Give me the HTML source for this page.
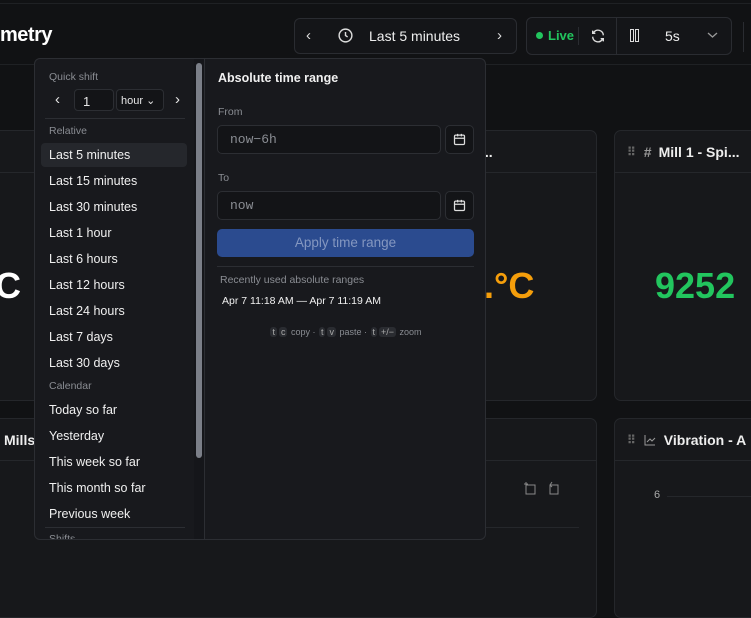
<!DOCTYPE html>
<html><head><meta charset="utf-8"><style>
*{box-sizing:border-box;margin:0;padding:0}
body{width:751px;height:588px;overflow:hidden;background:#111214;font-family:"Liberation Sans",sans-serif;color:#e6e6e6;position:relative}
.abs{position:absolute}
.panel{position:absolute;background:#17181b;border:1px solid #25272b;border-radius:7px}
.ph{position:absolute;left:0;right:0;top:0;height:42px;border-bottom:1px solid #25272b;display:flex;align-items:center;font-size:14px;font-weight:bold;color:#eee}
.btn{position:absolute;border:1px solid #2a2c31;border-radius:6px;background:#141518}
.dd{position:absolute;left:34px;top:58px;width:452px;height:482px;background:#18191d;border:1px solid #2c2e33;border-radius:6px;overflow:hidden}
.item{position:absolute;left:14px;font-size:12.5px;color:#f0f0f0}
.lab{position:absolute;left:14px;font-size:10.5px;color:#8a8d93}
.inp{position:absolute;border:1px solid #2c2e33;border-radius:5px;background:#131417;font-family:"Liberation Mono",monospace;font-size:13px;color:#8a8d93;padding-left:12px;display:flex;align-items:center}
.kbd{display:inline-block;background:#2a2c31;border-radius:3px;padding:0 2px;margin:0 1px;color:#aaa}
</style></head><body>
<div class="abs" style="left:0;top:0;width:751px;height:65px;background:#111214;border-bottom:1px solid #1f2124"></div>
<div class="abs" style="left:0;top:3px;width:751px;border-top:1px solid #1f2124"></div>
<div class="abs" style="left:0;top:24px;font-size:20px;font-weight:bold;color:#fff;letter-spacing:-0.5px">metry</div>

<div class="btn" style="left:294px;top:18px;width:223px;height:36px"></div>
<div class="abs" style="left:306px;top:27px;font-size:15px;color:#ddd">&#8249;</div>
<svg class="abs" style="left:337px;top:27px" width="17" height="17" viewBox="0 0 24 24" fill="none" stroke="#ddd" stroke-width="2"><circle cx="12" cy="12" r="9"/><path d="M12 7v5l3 2"/></svg>
<div class="abs" style="left:369px;top:28px;font-size:14px;color:#eee">Last 5 minutes</div>
<div class="abs" style="left:497px;top:27px;font-size:15px;color:#ddd">&#8250;</div>

<div class="btn" style="left:526px;top:17px;width:206px;height:38px"></div>
<div class="abs" style="left:536px;top:32px;width:7px;height:7px;border-radius:50%;background:#22c55e"></div>
<div class="abs" style="left:548px;top:28px;font-size:13px;color:#22c55e;font-weight:bold">Live</div>
<div class="abs" style="left:578px;top:27px;height:18px;border-left:1px solid #2a2c31"></div>
<svg class="abs" style="left:590px;top:28px" width="16" height="16" viewBox="0 0 24 24" fill="none" stroke="#ddd" stroke-width="2"><path d="M20 11a8 8 0 0 0-14-5L4 8M4 4v4h4M4 13a8 8 0 0 0 14 5l2-2M20 20v-4h-4"/></svg>
<div class="abs" style="left:616px;top:17px;height:38px;border-left:1px solid #2a2c31"></div>
<div class="abs" style="left:630px;top:29px;width:4px;height:13px;border:1.5px solid #ddd"></div>
<div class="abs" style="left:635px;top:29px;width:4px;height:13px;border:1.5px solid #ddd"></div>
<div class="abs" style="left:665px;top:28px;font-size:14px;color:#eee">5s</div>
<svg class="abs" style="left:707px;top:31px" width="11" height="8" viewBox="0 0 11 8" fill="none" stroke="#999" stroke-width="1.3"><path d="M1 2l4.5 4L10 2"/></svg>
<div class="abs" style="left:743px;top:22px;height:30px;border-left:1px solid #2a2c31"></div>

<!-- panels -->
<div class="panel" style="left:-10px;top:130px;width:607px;height:271px"><div class="ph" style="padding-left:490px">...</div>
<div class="abs" style="left:4px;top:134px;font-size:36px;font-weight:bold;color:#fff">C</div>
<div class="abs" style="left:493px;top:134px;font-size:36px;font-weight:bold;color:#f59e0b">.°C</div></div>
<div class="panel" style="left:614px;top:130px;width:150px;height:271px"><div class="ph" style="padding-left:12px"><span style="color:#666;font-size:12px;margin-right:8px">⠿</span><span style="color:#999;margin-right:7px">#</span>Mill 1 - Spi...</div>
<div class="abs" style="left:40px;top:134px;font-size:36px;font-weight:bold;color:#22c55e">9252</div></div>
<div class="panel" style="left:-10px;top:418px;width:607px;height:200px"><div class="ph" style="padding-left:13px">Mills</div>
<div class="abs" style="left:488px;top:108px;width:100px;border-top:1px solid #25272b"></div>
<svg class="abs" style="left:532px;top:62px" width="36" height="14" viewBox="0 0 36 14" fill="none" stroke="#888" stroke-width="1"><path d="M3 4h9v9H3zM3 1v5M1 3h4M27 4h8v9h-8zM27 4l2-3M27 4l2 2"/></svg></div>
<div class="panel" style="left:614px;top:418px;width:150px;height:200px"><div class="ph" style="padding-left:12px"><span style="color:#666;font-size:12px;margin-right:8px">⠿</span><svg width="12" height="12" viewBox="0 0 12 12" fill="none" stroke="#999" stroke-width="1" style="margin-right:8px"><path d="M1 1v10h10M3 8l3-3 2 2 3-3"/></svg>Vibration - A</div>
<div class="abs" style="left:39px;top:70px;font-size:11px;color:#aaa">6</div>
<div class="abs" style="left:52px;top:77px;width:100px;border-top:1px solid #25272b"></div></div>

<!-- dropdown -->
<div class="dd">
<div class="lab" style="top:12px">Quick shift</div>
<div class="abs" style="left:20px;top:32px;font-size:15px">&#8249;</div>
<div class="abs" style="left:39px;top:30px;width:40px;height:22px;border:1px solid #2c2e33;border-radius:4px;background:#131417;font-size:13px;padding:4px 0 0 8px">1</div>
<div class="abs" style="left:81px;top:30px;width:48px;height:22px;border:1px solid #2c2e33;border-radius:4px;background:#131417;font-size:11px;padding:4px 0 0 4px">hour &#8964;</div>
<div class="abs" style="left:140px;top:32px;font-size:15px">&#8250;</div>
<div class="abs" style="left:10px;top:59px;width:140px;border-top:1px solid #2c2e33"></div>
<div class="lab" style="top:66px">Relative</div>
<div class="abs" style="left:6px;top:84px;width:146px;height:24px;background:#25272c;border-radius:4px"></div>
<div class="item" style="top:89px">Last 5 minutes</div>
<div class="item" style="top:115px">Last 15 minutes</div>
<div class="item" style="top:141px">Last 30 minutes</div>
<div class="item" style="top:167px">Last 1 hour</div>
<div class="item" style="top:193px">Last 6 hours</div>
<div class="item" style="top:219px">Last 12 hours</div>
<div class="item" style="top:245px">Last 24 hours</div>
<div class="item" style="top:271px">Last 7 days</div>
<div class="item" style="top:297px">Last 30 days</div>
<div class="lab" style="top:321px">Calendar</div>
<div class="item" style="top:344px">Today so far</div>
<div class="item" style="top:370px">Yesterday</div>
<div class="item" style="top:396px">This week so far</div>
<div class="item" style="top:422px">This month so far</div>
<div class="item" style="top:448px">Previous week</div>
<div class="abs" style="left:10px;top:468px;width:140px;border-top:1px solid #2c2e33"></div>
<div class="lab" style="top:474px">Shifts</div>
<div class="abs" style="left:159px;top:0;width:11px;height:482px;background:#15161a;border-right:1px solid #2c2e33"></div>
<div class="abs" style="left:161px;top:4px;width:6px;height:395px;background:#7b7f88;border-radius:3px"></div>

<div class="abs" style="left:183px;top:12px;font-size:12.5px;font-weight:bold;color:#f0f0f0">Absolute time range</div>
<div class="abs" style="left:183px;top:47px;font-size:10.5px;color:#8a8d93">From</div>
<div class="inp" style="left:182px;top:66px;width:224px;height:29px">now−6h</div>
<div class="inp" style="left:410px;top:66px;width:29px;height:29px;padding:0;justify-content:center"><svg width="15" height="15" viewBox="0 0 24 24" fill="none" stroke="#ddd" stroke-width="2"><rect x="4" y="5" width="16" height="15" rx="2"/><path d="M4 10h16M9 3v4M15 3v4"/></svg></div>
<div class="abs" style="left:183px;top:113px;font-size:10.5px;color:#8a8d93">To</div>
<div class="inp" style="left:182px;top:132px;width:224px;height:29px">now</div>
<div class="inp" style="left:410px;top:132px;width:29px;height:29px;padding:0;justify-content:center"><svg width="15" height="15" viewBox="0 0 24 24" fill="none" stroke="#ddd" stroke-width="2"><rect x="4" y="5" width="16" height="15" rx="2"/><path d="M4 10h16M9 3v4M15 3v4"/></svg></div>
<div class="abs" style="left:182px;top:170px;width:257px;height:28px;background:#2b4b8f;border-radius:5px;color:#8497c0;font-size:13.5px;text-align:center;line-height:28px">Apply time range</div>
<div class="abs" style="left:182px;top:207px;width:257px;border-top:1px solid #2c2e33"></div>
<div class="abs" style="left:185px;top:215px;font-size:10.5px;color:#8a8d93">Recently used absolute ranges</div>
<div class="abs" style="left:187px;top:236px;font-size:10.5px;color:#f0f0f0">Apr 7 11:18 AM — Apr 7 11:19 AM</div>
<div class="abs" style="left:182px;top:268px;width:257px;text-align:center;font-size:9px;color:#8a8d93"><span class="kbd">t</span><span class="kbd">c</span> copy · <span class="kbd">t</span><span class="kbd">v</span> paste · <span class="kbd">t</span><span class="kbd">+/−</span> zoom</div>
</div>
</body></html>
